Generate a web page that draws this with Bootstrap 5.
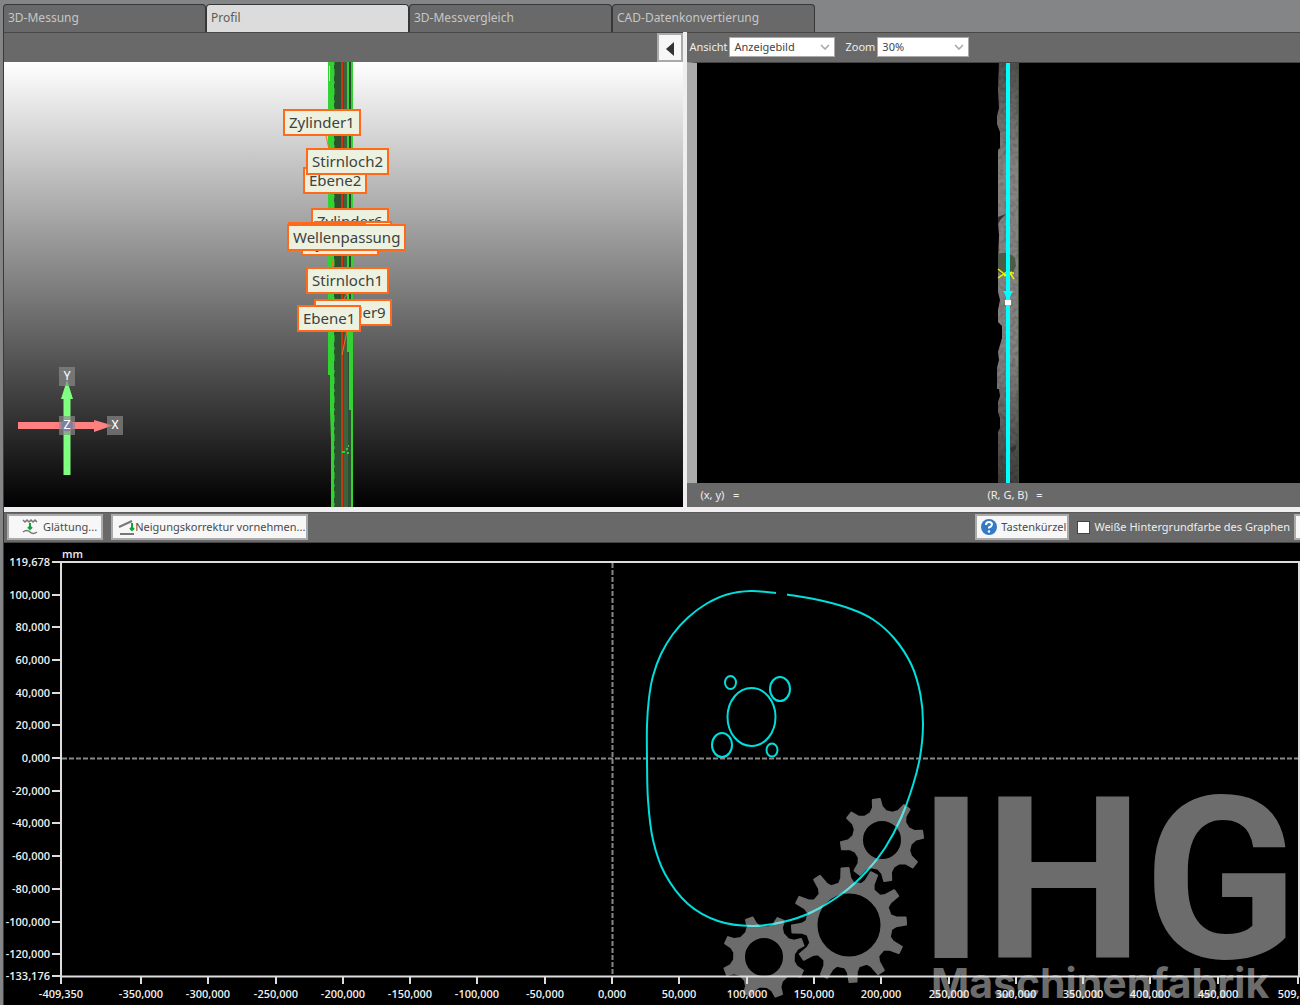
<!DOCTYPE html>
<html lang="de">
<head>
<meta charset="utf-8">
<meta name="viewport" content="width=device-width, initial-scale=1">
<title>Profil</title>
<link href="https://cdn.jsdelivr.net/npm/bootstrap@5.3.0/dist/css/bootstrap.min.css" rel="stylesheet">
<style>
  body { background: #848587; font-family: "Noto Sans", "Open Sans", sans-serif; font-size: 12px; line-height: 16px; color: #eee; overflow-x: hidden; }
  .app-shell { padding: 4px 0 0 3px; }
  .mode-tabs { height: 28px; }
  .mode-tab { flex: 0 1 203px; border: 1px solid #363738; border-bottom: 0; border-radius: 4px 4px 0 0; background: #696969; color: #c6c6c6; text-align: left; padding: 0 4px 1px; }
  .mode-tab.active { background: #dcdcdc; color: #5c5c50; }
  .workspace { border-left: 1px solid #3a3a3a; background: #696969; }
  .split-row { border-bottom: 5px solid #f0eef0; }
  .pane-left { flex: 680 1 0; min-width: 0; border-right: 4px solid #f0eef0; }
  .pane-right { flex: 613 1 0; min-width: 0; }
  .pane-bar { height: 30px; border-top: 1px solid #474747; background: #696969; }
  .pane-bar label { font-size: 11px; }
  .view-bar { gap: 2px; padding: 0 2px 1px; }
  .tool-btn { height: 26px; border: 2px solid #aaa; border-radius: 0; background: #f7f7f7; color: #4a4a4a; font-size: 11px; line-height: 16px; white-space: nowrap; padding: 0 4px; }
  .tight-btn { padding: 0 1px 0 4px; }
  .fold-btn { width: 26px; height: 29px; padding: 0; }
  .pick { appearance: none; height: 20px; border: 1px solid #aaa; border-radius: 0; color: #444; font-size: 11px; line-height: 16px; padding: 0 4px; background: #fff url("data:image/svg+xml,%3Csvg xmlns='http://www.w3.org/2000/svg' width='10' height='6'%3E%3Cpath d='M1 1l4 4 4-4' fill='none' stroke='%23aaa' stroke-width='1.6'/%3E%3C/svg%3E") no-repeat right 4px center; }
  .pick-view { width: 106px; }
  .pick-zoom { width: 92px; }
  .scene { height: 445px; background: linear-gradient(#fff, #000); }
  .scene svg, .photo svg { display: block; }
  .tag { position: absolute; height: 27px; border: 2px solid #ff6a1a; background: #edf1e0; color: #3c4240; font-size: 15px; line-height: 22px; padding: 0 4px; white-space: nowrap; overflow: hidden; }
  .tag-z1 { left: 279px; top: 47px; }
  .tag-e2 { left: 299px; top: 105px; }
  .tag-s2 { left: 302px; top: 86px; }
  .tag-z6 { left: 307px; top: 146px; }
  .tag-z7 { left: 297px; top: 167px; }
  .tag-z8 { left: 310px; top: 159px; }
  .tag-z5 { left: 284px; top: 160px; }
  .tag-wp { left: 283px; top: 162px; }
  .tag-s1 { left: 302px; top: 205px; }
  .tag-z9 { left: 310px; top: 237px; }
  .tag-e1 { left: 293px; top: 243px; }
  .photo { height: 421px; background: #000; border-left: 10px solid #aaa; border-top: 1px solid #444; }
  .status { height: 24px; font-size: 11px; padding-left: 13px; }
  .status span { flex: 0 0 287px; }
  .graph-bar { height: 31px; border-top: 1px solid #5a5a5a; border-bottom: 1px solid #444; padding: 0 0 1px 3px; }
  .graph-bar label { font-size: 11px; }
  .edge-btn { width: 6px; border-right: 0; padding: 0; }
  .box { appearance: none; width: 13px; height: 13px; margin: 0; background: #fff; border: 1px solid #444; }
  .box:checked { background: #2f74c0; }
  .graph { display: block; width: 100%; background: #000; }
  .axis-text { font: 600 11px "Open Sans", "Noto Sans", sans-serif; fill: #eee; }
  .logo-big { font: 700 226px Roboto, sans-serif; }
  .logo-sub { font: 700 41px Inter, sans-serif; }
</style>
<script src="https://cdn.jsdelivr.net/npm/bootstrap@5.3.0/dist/js/bootstrap.bundle.min.js"></script>
</head>
<body>
<div class="app-shell">
  <nav class="mode-tabs d-flex" aria-label="Modus">
    <button class="mode-tab" type="button">3D-Messung</button>
    <button class="mode-tab active" type="button">Profil</button>
    <button class="mode-tab" type="button">3D-Messvergleich</button>
    <button class="mode-tab" type="button">CAD-Datenkonvertierung</button>
  </nav>

  <main class="workspace">
    <div class="split-row d-flex">
      <section class="pane-left">
        <div class="pane-bar d-flex justify-content-end">
          <button class="tool-btn fold-btn" type="button" aria-label="Einklappen"><svg width="10" height="14"><path d="M9 0v14L1 7z" fill="#333"/></svg></button>
        </div>
        <div class="scene position-relative overflow-hidden">
          <svg width="679" height="445" viewBox="4 62 679 445">
            <path d="M328 62H353V507H331V440L330 410V375H328z" fill="#32d232"/>
            <path d="M334 62H351V507H334z" fill="#2d5130"/>
            <path d="M343.500 62H348V507H343.500z" fill="#3a6540"/>
            <path d="M334 62v300M334 370v137" stroke="#32d232" stroke-dasharray="3 4 7 5"/>
            <path d="M348 62v290M352 62v445" stroke="#32d232" stroke-width="2"/>
            <path d="M350 62v250" stroke="#263e2b"/>
            <path d="M350 320v90" stroke="#32d232" stroke-width="2"/>
            <path d="M342 62V507" stroke="#c93413" stroke-width="2"/>
            <path d="M329.500 66v15" stroke="#d9ffd9"/>
            <path d="M326 136l3 13M347 294l-5 8M347 331l-5 24M331 256l2 11" fill="none" stroke="#ff6a1a"/>
            <path d="M342 452h3M346 449h2M347 453h2M348 446h1" stroke="#32d232" stroke-width="2"/>
            <path d="M18 422H94V420L113 425.500L94 432V429H18z" fill="#ff8080"/>
            <path d="M63.500 475V399H61L67 380L73 399H70.500V475z" fill="#80ff80"/>
            <circle cx="67" cy="425.500" r="6" fill="#6868dd"/>
            <g fill="#8a8a8a" fill-opacity=".68"><path d="M59 367h16v19H59zM59 416h16v19H59zM107 416h16v19h-16z"/></g>
            <g fill="#fff" font-family="Roboto, sans-serif" font-size="12" text-anchor="middle"><text x="67" y="380">Y</text><text x="67" y="429">Z</text><text x="115" y="429">X</text></g>
          </svg>
          <span class="tag tag-z1">Zylinder1</span>
          <span class="tag tag-e2">Ebene2</span>
          <span class="tag tag-s2">Stirnloch2</span>
          <span class="tag tag-z6">Zylinder6</span>
          <span class="tag tag-z7">Zylinder7</span>
          <span class="tag tag-z8">Zylinder8</span>
          <span class="tag tag-z5">Zylinder5</span>
          <span class="tag tag-wp">Wellenpassung</span>
          <span class="tag tag-s1">Stirnloch1</span>
          <span class="tag tag-z9">Zylinder9</span>
          <span class="tag tag-e1">Ebene1</span>
        </div>
      </section>

      <section class="pane-right">
        <div class="pane-bar view-bar d-flex align-items-center">
          <label for="view">Ansicht</label>
          <select class="pick pick-view" id="view"><option>Anzeigebild</option></select>
          <label class="ms-2" for="zoom">Zoom</label>
          <select class="pick pick-zoom" id="zoom"><option>30%</option></select>
        </div>
        <div class="photo overflow-hidden">
          <svg width="603" height="420" viewBox="697 63 603 420">
            <defs>
              <linearGradient id="steel" x1="0" y1="0" x2="0" y2="1"><stop offset="0" stop-color="#50504e"/><stop offset=".25" stop-color="#878583"/><stop offset=".7" stop-color="#848281"/><stop offset="1" stop-color="#403e3c"/></linearGradient>
              <filter id="grain" x="0" y="0" width="1" height="1"><feTurbulence type="fractalNoise" baseFrequency=".25" numOctaves="2" seed="4"/><feColorMatrix values="0 0 0 0 0  0 0 0 0 0  0 0 0 0 0  .8 0 0 0 -.3"/><feComposite in2="SourceGraphic" operator="in" result="n"/><feMerge><feMergeNode in="SourceGraphic"/><feMergeNode in="n"/></feMerge></filter>
            </defs>
            <path filter="url(#grain)" fill="url(#steel)" d="M999 62H1019V483H998V432L1000 428V418L998 412V402L1000 396L999 389H997V368L999 360L998 352L1002 338V326L998 322V310L1000 300L998 292V264L999 235L998 222V150L1000 148V132L997 124V116L999 108L998 90z"/>
            <path d="M998 254q10-4 17 4l1 8-4 8q-8 4-14-2z" fill="#4c5b47"/>
            <path d="M998 217l8-3-5 5-3 5zM1010 448l6-3v4l-4 4z" fill="#333"/>
            <path d="M1018.500 62V483" stroke="#405038"/>
            <path d="M998 269l10 8M998 278l10-7M1007 273h7M1008 270l6 9M1004 276l8-4" stroke="#f4f000" stroke-width="1.500"/>
            <path d="M1008 62V483" stroke="#00ffff" stroke-width="4"/>
            <path d="M1003 291h10l-5 9z" fill="#00ffff"/>
            <path d="M1005 300h6v5h-6z" fill="#fff"/>
          </svg>
        </div>
        <div class="status d-flex align-items-center"><span>(x, y) &nbsp; =</span><span>(R, G, B) &nbsp; =</span></div>
      </section>
    </div>

    <section>
      <div class="graph-bar d-flex align-items-center">
        <button class="tool-btn d-flex align-items-center me-2 ps-2" type="button">
          <svg class="ms-1 me-1" width="18" height="18" fill="none" stroke="#777" stroke-width="1.500"><path d="M2 2l2 2 2-2 2 2 2-2 2 2 2-2 2 2M2 14q4-3 7 0t7 0"/><path d="M9 5v6M7 9l2 2 2-2" stroke="#12a33a" stroke-width="2"/></svg>Glättung...</button>
        <button class="tool-btn tight-btn d-flex align-items-center" type="button">
          <svg width="18" height="18" fill="none" stroke="#777" stroke-width="2"><path d="M2 9L15 3M3 16h14"/><path d="M15 5v7M13 10l2 2 2-2" stroke="#12a33a"/></svg>Neigungskorrektur vornehmen...</button>
        <button class="tool-btn tight-btn d-flex align-items-center ms-auto" type="button">
          <svg class="me-1" width="16" height="16"><circle cx="8" cy="8" r="8" fill="#347ac4"/><path d="M5 6q0-3 3-3t3 2.500q0 1.500-3 3v1" fill="none" stroke="#fff" stroke-width="2"/><circle cx="8" cy="12.500" r="1.200" fill="#fff"/></svg>Tastenkürzel</button>
        <input class="box ms-2 me-1" type="checkbox" id="white-bg">
        <label class="me-1" for="white-bg">Weiße Hintergrundfarbe des Graphen</label>
        <button class="tool-btn edge-btn" type="button" aria-label="Weitere"></button>
      </div>
      <svg class="graph" viewBox="4 543 1296 462" role="img" aria-label="Profil in mm">
        <g fill="#6c6c6c">
          <g id="gears"></g>
          <text class="logo-big" x="918" y="958">IHG</text>
          <text class="logo-sub" x="931" y="998">Maschinenfabrik</text>
        </g>
        <path d="M612.500 563V976M62 758.500H1298" stroke="#888" stroke-width="2" stroke-dasharray="5 2"/>
        <path d="M61 562H1299V976.500H61z" fill="none" stroke="#ddd" stroke-width="2"/>
        <g id="axes" stroke="#ddd" stroke-width="2"></g>
        <g id="axis-labels" class="axis-text"><text x="62" y="558">mm</text></g>
        <g fill="none" stroke="#00dede" stroke-width="2">
          <path id="outline"/>
          <ellipse cx="730.500" cy="682.500" rx="5.500" ry="6.500"/>
          <ellipse cx="780" cy="689" rx="10" ry="12"/>
          <ellipse cx="751.500" cy="717" rx="24" ry="29"/>
          <ellipse cx="722" cy="745" rx="10" ry="12"/>
          <ellipse cx="772" cy="750" rx="5.500" ry="6.500"/>
        </g>
        <path id="outline-glow" fill="none" stroke="#6cdcdc" stroke-width="2" clip-path="url(#gear-area)"/>
        <defs><clipPath id="gear-area"></clipPath></defs>
      </svg>
    </section>
  </main>
</div>
<script>
  const NS = 'http://www.w3.org/2000/svg';
  const el = id => document.getElementById(id);
  function add(parent, name, attrs, text) {
    const n = document.createElementNS(NS, name);
    for (const k in attrs) n.setAttribute(k, attrs[k]);
    if (text) n.textContent = text;
    parent.append(n);
  }
  const fmt = v => v.toFixed(3).replace('.', ',');
  const xs = [-409.35, -350, -300, -250, -200, -150, -100, -50, 0, 50, 100, 150, 200, 250, 300, 350, 400, 450, 509.35];
  const ys = [119.678, 100, 80, 60, 40, 20, 0, -20, -40, -60, -80, -100, -120, -133.176];
  xs.forEach(v => {
    const x = Math.round(612 + v * 1.346);
    add(el('axes'), 'path', { d: `M${x} 977v7` });
    add(el('axis-labels'), 'text', { x, y: 998, 'text-anchor': 'middle' }, fmt(v));
  });
  ys.forEach(v => {
    const y = Math.round(758 - v * 1.635);
    add(el('axes'), 'path', { d: `M52 ${y}h9` });
    add(el('axis-labels'), 'text', { x: 50, y: y + 4, 'text-anchor': 'end' }, fmt(v));
  });

  // Smooth curve through the measured points, open at the top of the part
  function smooth(p) {
    let d = `M${p[0]}`;
    for (let i = 0; i < p.length - 1; i++) {
      const a = p[i - 1] || p[i], b = p[i], c = p[i + 1], e = p[i + 2] || c;
      d += `C${b[0] + (c[0] - a[0]) / 6} ${b[1] + (c[1] - a[1]) / 6} ${c[0] - (e[0] - b[0]) / 6} ${c[1] - (e[1] - b[1]) / 6} ${c[0]} ${c[1]}`;
    }
    return d;
  }
  const contour = [[776,593],[751,591],[727,594.5],[706,604],[688,617.5],[673,634],[661,654],[653,676],[649,698],[647,725],[647,758],[648,800],[653,840],[665,874],[688,904],[718,921],[752,926],[783,922],[812,912],[843,893],[867,871],[885,848],[901,818],[913,785],[920,757],[923,725],[920.5,695],[911.5,665],[894,638],[873,619.5],[851,609],[821,600.5],[787,594.5]];
  el('outline').setAttribute('d', smooth(contour));
  el('outline-glow').setAttribute('d', smooth(contour));

  // [cx, cy, teeth, hole, root, tip, first angle, tip half width, root half width]
  [[882,840,8,19,28,41,-8,3.5,8],[849,925,12,31.5,42,57,-4,3.5,7],[764,957,8,19,29,41,-21,3.5,8]].forEach(([cx, cy, n, hole, root, tip, a0, tw, rw]) => {
    let pts = [];
    for (let i = 0; i < n; i++) {
      const a = (a0 + i * 360 / n) * Math.PI / 180;
      [[-rw, root], [-tw - 1, root + 5], [-tw, tip], [tw, tip], [tw + 1, root + 5], [rw, root]].forEach(([u, r]) =>
        pts.push((cx + u * Math.cos(a) + r * Math.sin(a)).toFixed(1) + ' ' + (cy + u * Math.sin(a) - r * Math.cos(a)).toFixed(1)));
    }
    const h = hole + 1;
    const d = `M${pts.join('L')}ZM${cx - h} ${cy}a${h} ${h} 0 1 0 ${2 * h} 0a${h} ${h} 0 1 0 ${-2 * h} 0Z`;
    add(el('gears'), 'path', { d, 'fill-rule': 'evenodd', stroke: '#6c6c6c', 'stroke-width': 2, 'stroke-linejoin': 'round' });
    add(el('gear-area'), 'path', { d, 'clip-rule': 'evenodd' });
  });
</script>
</body>
</html>
